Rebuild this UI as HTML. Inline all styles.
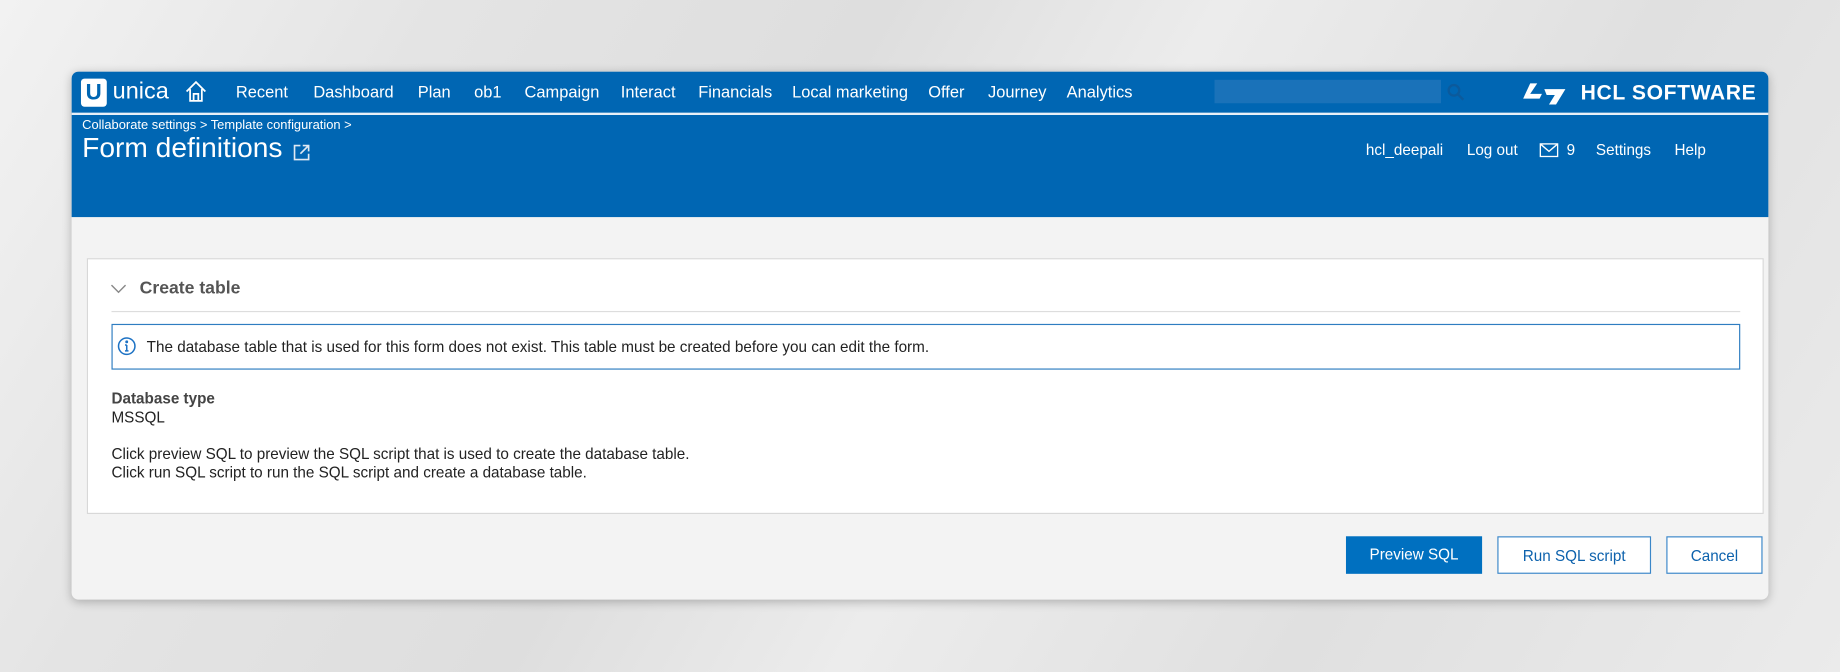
<!DOCTYPE html>
<html><head><meta charset="utf-8"><style>
html,body{margin:0;padding:0;width:1840px;height:672px;overflow:hidden;background:#e6e6e6;}
#s{position:absolute;left:0;top:0;width:1568px;height:573px;transform:scale(1.17347);transform-origin:0 0;font-family:"Liberation Sans",Arial,sans-serif;overflow:hidden;
background:linear-gradient(120deg,#f2f2f2 0%,#e4e4e4 20%,#dedede 40%,#ececec 55%,#e0e0e0 75%,#ebebeb 100%);}
.abs{position:absolute}
.frame{left:61px;top:61px;width:1446px;height:450px;border-radius:6px;overflow:hidden;background:#f3f3f3;box-shadow:0 2px 8px rgba(0,0,0,.25)}
.nav{left:0;top:0;width:1446px;height:124px;background:#0066b3}
.line{left:0;top:35px;width:1446px;height:2px;background:#e8f0f8}
.nv{top:9px;color:#fff;font-size:14px}
.w{color:#fff}
.panel{left:13px;top:159px;width:1427px;height:216px;background:#fff;border:1px solid #d8d8d8}
.txt{font-size:13px;color:#222}
.btn{top:396px;height:32px;font-size:13px;text-align:center;line-height:32px;box-sizing:border-box}
</style></head><body><div id="s">
<div class="abs frame">
 <div class="abs nav"></div>
 <div class="abs line"></div>
 <div class="abs" style="left:8px;top:6px;width:22px;height:24px;background:#fff;border-radius:3px"></div>
 <div class="abs" style="left:12px;top:8px;color:#0066b3;font-weight:bold;font-size:19px">U</div>
 <div class="abs w" style="left:35px;top:6px;font-size:20px">unica</div>
 <svg class="abs" style="left:96px;top:7px" width="20" height="20" viewBox="0 0 20 20" fill="none" stroke="#fff" stroke-width="1.5"><path d="M2 10L10 2l8 8M5 8v10h10V8M8 18v-6h4v6"/></svg>
 <div class="abs nv" style="left:140px">Recent</div>
 <div class="abs nv" style="left:206px">Dashboard</div>
 <div class="abs nv" style="left:295px">Plan</div>
 <div class="abs nv" style="left:343px">ob1</div>
 <div class="abs nv" style="left:386px">Campaign</div>
 <div class="abs nv" style="left:468px">Interact</div>
 <div class="abs nv" style="left:534px">Financials</div>
 <div class="abs nv" style="left:614px">Local marketing</div>
 <div class="abs nv" style="left:730px">Offer</div>
 <div class="abs nv" style="left:781px">Journey</div>
 <div class="abs nv" style="left:848px">Analytics</div>
 <div class="abs" style="left:974px;top:7px;width:193px;height:20px;background:#1a72b9"></div>
 <svg class="abs" style="left:1172px;top:10px" width="16" height="16" viewBox="0 0 16 16" fill="none" stroke="#0b5a9c" stroke-width="2"><circle cx="6" cy="6" r="4.5"/><path d="M9.5 9.5L14 14"/></svg>
 <svg class="abs" style="left:1235px;top:9px" width="42" height="20" viewBox="0 0 42 20" fill="#fff"><path d="M8 1h6l-6 9h10l-2 4H2z"/><path d="M20 6h18l-8 13h-6l5-8h-7z"/></svg>
 <div class="abs w" style="left:1286px;top:8px;font-size:18px;font-weight:bold;letter-spacing:.5px">HCL SOFTWARE</div>
 <div class="abs w" style="left:9px;top:40px;font-size:11px">Collaborate settings &gt; Template configuration &gt;</div>
 <div class="abs w" style="left:9px;top:52px;font-size:24px">Form definitions</div>
 <svg class="abs" style="left:188px;top:61px" width="16" height="16" viewBox="0 0 16 16" fill="none" stroke="#dfe9f3" stroke-width="1.4"><path d="M7 2H2v12h12V9M9 2h5v5M14 2L7 9"/></svg>
 <div class="abs w" style="left:1103px;top:59px;font-size:13px">hcl_deepali</div>
 <div class="abs w" style="left:1189px;top:59px;font-size:13px">Log out</div>
 <svg class="abs" style="left:1251px;top:61px" width="16" height="12" viewBox="0 0 16 12" fill="none" stroke="#fff" stroke-width="1.2"><rect x=".6" y=".6" width="14.8" height="10.8"/><path d="M1 1l7 6 7-6"/></svg>
 <div class="abs w" style="left:1274px;top:59px;font-size:13px">9</div>
 <div class="abs w" style="left:1299px;top:59px;font-size:13px">Settings</div>
 <div class="abs w" style="left:1366px;top:59px;font-size:13px">Help</div>
 <div class="abs panel">
  <svg class="abs" style="left:19px;top:20px" width="14" height="10" viewBox="0 0 14 10" fill="none" stroke="#888" stroke-width="1.2"><path d="M1 2l6 6 6-6"/></svg>
  <div class="abs" style="left:44px;top:16px;font-size:15px;font-weight:bold;color:#555">Create table</div>
  <div class="abs" style="left:20px;top:44px;width:1388px;height:1px;background:#ddd"></div>
  <div class="abs" style="left:20px;top:55px;width:1386px;height:37px;border:1px solid #2f7dc1"></div>
  <svg class="abs" style="left:25px;top:66px" width="16" height="16" viewBox="0 0 16 16" fill="none" stroke="#1d72c4" stroke-width="1.3"><circle cx="8" cy="8" r="7"/><path d="M8 7v5M6.5 12h3M6.5 7H8"/><circle cx="8" cy="4.3" r=".6" fill="#1d72c4"/></svg>
  <div class="abs txt" style="left:50px;top:67px">The database table that is used for this form does not exist. This table must be created before you can edit the form.</div>
  <div class="abs txt" style="left:20px;top:111px;font-weight:bold;color:#444">Database type</div>
  <div class="abs txt" style="left:20px;top:127px">MSSQL</div>
  <div class="abs txt" style="left:20px;top:158px">Click preview SQL to preview the SQL script that is used to create the database table.</div>
  <div class="abs txt" style="left:20px;top:174px">Click run SQL script to run the SQL script and create a database table.</div>
 </div>
 <div class="abs btn" style="left:1086px;width:116px;background:#0070c0;color:#fff">Preview SQL</div>
 <div class="abs btn" style="left:1215px;width:131px;background:#fff;border:1px solid #3a86c8;color:#0d62ad">Run SQL script</div>
 <div class="abs btn" style="left:1359px;width:82px;background:#fff;border:1px solid #3a86c8;color:#0d62ad">Cancel</div>
</div>
</div></body></html>
